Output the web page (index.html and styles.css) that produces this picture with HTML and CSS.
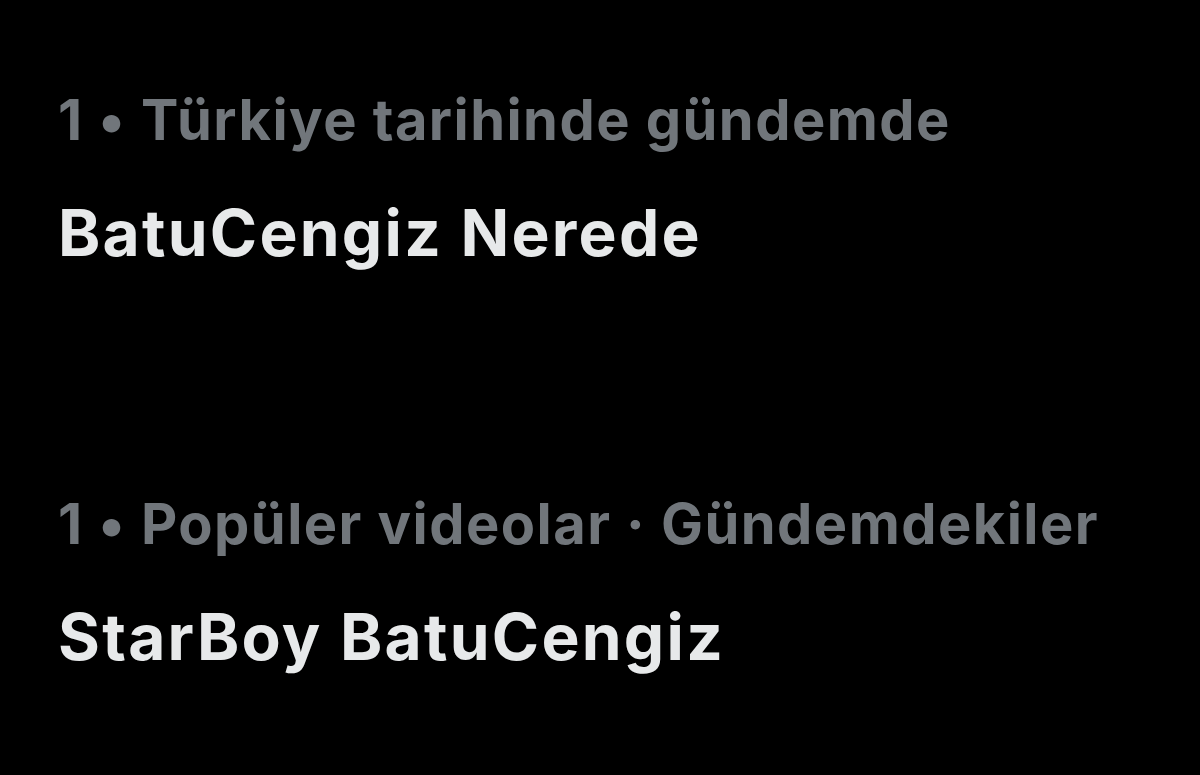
FILE: index.html
```html
<!DOCTYPE html>
<html lang="tr">
<head>
<meta charset="utf-8">
<link rel="stylesheet" href="styles.css">
</head>
<body>
<main class="trends">
  <section class="trend">
    <div class="meta">1 • Türkiye tarihinde gündemde</div>
    <div class="title">BatuCengiz Nerede</div>
  </section>
  <section class="trend">
    <div class="meta">1 • Popüler videolar · Gündemdekiler</div>
    <div class="title">StarBoy BatuCengiz</div>
  </section>
</main>
</body>
</html>
```
FILE: styles.css
```css
html, body {
  margin: 0;
  padding: 0;
  background: #000;
  width: 1200px;
  height: 775px;
  overflow: hidden;
}
.trends {
  display: flex;
  flex-direction: column;
  gap: 218px;
  padding: 86px 0 0 58px;
  font-family: Inter, "Noto Sans", sans-serif;
  font-weight: 700;
}
.trend {
  display: flex;
  flex-direction: column;
  gap: 40px;
}
.meta {
  color: #71767b;
  font-size: 56px;
  line-height: 68px;
  letter-spacing: 1.45px;
}
.title {
  color: #e7e9ea;
  font-size: 64px;
  line-height: 78px;
  letter-spacing: 2.25px;
}
```
